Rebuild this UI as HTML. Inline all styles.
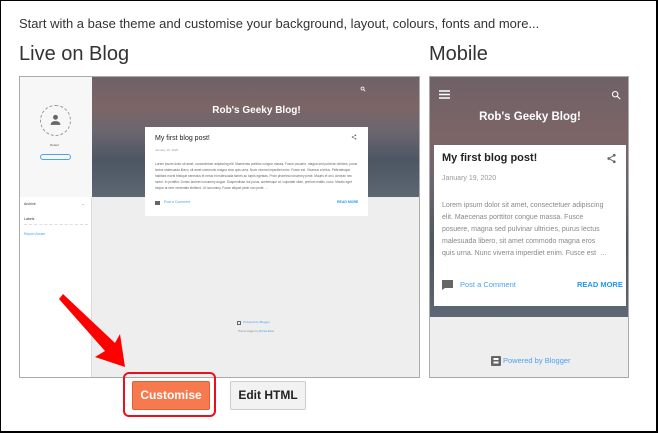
<!DOCTYPE html>
<html><head><meta charset="utf-8"><style>
*{box-sizing:border-box;margin:0;padding:0}
body{width:658px;height:433px;overflow:hidden;background:#fff;font-family:"Liberation Sans",Arial,sans-serif;position:relative}
.frame{position:absolute;left:0;top:0;width:658px;height:433px;border:1px solid #000;border-right:2px solid #000;border-bottom:2px solid #000;pointer-events:none;z-index:10}
.a{position:absolute}
.hdr{background:linear-gradient(180deg,#6f6169 0%,#7c6566 25%,#6b6670 45%,#4d5663 70%,#5d6874 100%)}
</style></head><body>
<div class="frame"></div>
<div class="a" style="left:19px;top:16px;font-size:13px;color:#333">Start with a base theme and customise your background, layout, colours, fonts and more...</div>
<div class="a" style="left:19px;top:43px;font-size:20px;color:#333">Live on Blog</div>
<div class="a" style="left:429px;top:43px;font-size:20px;color:#333">Mobile</div>

<div class="a" style="left:19px;top:76px;width:401px;height:302px;border:1px solid #aaa;background:#eee;overflow:hidden">
  <div class="a" style="left:0;top:0;width:72px;height:120px;background:#f7f7f7"></div>
  <div class="a" style="left:0;top:120px;width:72px;height:182px;background:#fff;border-right:1px solid #ddd"></div>
  <div class="a" style="left:20px;top:28px;width:31px;height:31px;border:1px dashed #999;border-radius:50%"></div>
  <svg class="a" style="left:29px;top:36px" width="13" height="13" viewBox="0 0 24 24"><circle cx="12" cy="8" r="4.5" fill="#666"/><path d="M3 22c0-5 4-7 9-7s9 2 9 7z" fill="#666"/></svg>
  <div class="a" style="left:30px;top:66px;font-size:3px;color:#555">Robert</div>
  <div class="a" style="left:20px;top:77px;width:31px;height:6px;border:1px solid #4aa3f2;border-radius:4px"></div>
  <div class="a" style="left:4px;top:125px;font-size:3.5px;color:#333">Archive</div>
  <div class="a" style="left:62px;top:124px;font-size:4px;color:#555">–</div>
  <div class="a" style="left:4px;top:140px;font-size:3.5px;color:#333">Labels</div>
  <div class="a" style="left:4px;top:147px;width:64px;border-top:1px dashed #ddd"></div>
  <div class="a" style="left:4px;top:155px;font-size:3.5px;color:#4aa3f2">Report Abuse</div>
  <div class="a hdr" style="left:72px;top:0;width:329px;height:120px"></div>
  <svg class="a" style="left:340px;top:9px" width="6" height="6" viewBox="0 0 24 24"><circle cx="10" cy="10" r="6" stroke="#fff" stroke-width="3" fill="none"/><path d="M14 14l7 7" stroke="#fff" stroke-width="3"/></svg>
  <div class="a" style="left:72px;top:28px;width:329px;text-align:center;color:#fff;font-weight:bold;font-size:10px">Rob's Geeky Blog!</div>
  <div class="a" style="left:125px;top:50px;width:223px;height:89px;background:#fff">
    <div class="a" style="left:10px;top:8px;font-size:7px;color:#222">My first blog post!</div>
    <svg class="a" style="left:206px;top:7px" width="6" height="6" viewBox="0 0 24 24"><circle cx="18" cy="5" r="3" fill="#666"/><circle cx="6" cy="12" r="3" fill="#666"/><circle cx="18" cy="19" r="3" fill="#666"/><path d="M18 5L6 12l12 7" stroke="#666" stroke-width="2" fill="none"/></svg>
    <div class="a" style="left:10px;top:21px;font-size:3px;color:#999">January 19, 2020</div>
    <div class="a" style="left:10px;top:34px;width:204px;font-size:3.2px;line-height:6px;color:#666;height:30px;overflow:hidden">Lorem ipsum dolor sit amet, consectetuer adipiscing elit. Maecenas porttitor congue massa. Fusce posuere, magna sed pulvinar ultricies, purus lectus malesuada libero, sit amet commodo magna eros quis urna. Nunc viverra imperdiet enim. Fusce est. Vivamus a tellus. Pellentesque habitant morbi tristique senectus et netus et malesuada fames ac turpis egestas. Proin pharetra nonummy pede. Mauris et orci. Aenean nec lorem. In porttitor. Donec laoreet nonummy augue. Suspendisse dui purus, scelerisque at, vulputate vitae, pretium mattis, nunc. Mauris eget neque at sem venenatis eleifend. Ut nonummy. Fusce aliquet pede non pede. …</div>
    <div class="a" style="left:10px;top:74px;width:5px;height:4px;background:#666"></div>
    <div class="a" style="left:19px;top:73px;font-size:3.5px;color:#4aa3f2">Post a Comment</div>
    <div class="a" style="left:192px;top:73px;font-size:3.5px;color:#2196f3;font-weight:bold">READ MORE</div>
  </div>
  <div class="a" style="left:217px;top:244px;width:4px;height:4px;border:1px solid #666"></div>
  <div class="a" style="left:223px;top:243px;font-size:3px;color:#4aa3f2">Powered by Blogger</div>
  <div class="a" style="left:218px;top:253px;font-size:2.5px;color:#888">Theme images by <span style="color:#4aa3f2">Michael Elkan</span></div>
</div>

<div class="a" style="left:429px;top:76px;width:200px;height:302px;border:1px solid #aaa;background:#eee;overflow:hidden">
  <div class="a hdr" style="left:0;top:0;width:200px;height:240px"></div>
  <svg class="a" style="left:9px;top:13px" width="11" height="9" viewBox="0 0 11 9"><path d="M0 1h11M0 4.5h11M0 8h11" stroke="#fff" stroke-width="1.4"/></svg>
  <svg class="a" style="left:181px;top:13px" width="10" height="10" viewBox="0 0 24 24"><circle cx="10" cy="10" r="6.5" stroke="#fff" stroke-width="2.5" fill="none"/><path d="M15 15l7 7" stroke="#fff" stroke-width="2.5"/></svg>
  <div class="a" style="left:0;top:34px;width:200px;text-align:center;color:#fff;font-weight:bold;font-size:11.5px">Rob's Geeky Blog!</div>
  <div class="a" style="left:4px;top:68px;width:192px;height:161px;background:#fff">
    <div class="a" style="left:8px;top:7px;font-size:11px;font-weight:bold;color:#222">My first blog post!</div>
    <svg class="a" style="left:172px;top:8px" width="11" height="11" viewBox="0 0 24 24"><circle cx="18" cy="5" r="3" fill="#666"/><circle cx="6" cy="12" r="3" fill="#666"/><circle cx="18" cy="19" r="3" fill="#666"/><path d="M18 5L6 12l12 7" stroke="#666" stroke-width="2" fill="none"/></svg>
    <div class="a" style="left:8px;top:30px;font-size:7px;color:#999">January 19, 2020</div>
    <div class="a" style="left:8px;top:55px;width:180px;font-size:7px;line-height:12px;color:#888;height:60px;overflow:hidden;white-space:nowrap">Lorem ipsum dolor sit amet, consectetuer adipiscing<br>elit. Maecenas porttitor congue massa. Fusce<br>posuere, magna sed pulvinar ultricies, purus lectus<br>malesuada libero, sit amet commodo magna eros<br>quis urna. Nunc viverra imperdiet enim. Fusce est &nbsp;…</div>
    <svg class="a" style="left:8px;top:135px" width="11" height="10" viewBox="0 0 11 10"><path d="M0 0h11v8H3L0 10z" fill="#666"/></svg>
    <div class="a" style="left:26px;top:135px;font-size:7.5px;color:#4aa3f2">Post a Comment</div>
    <div class="a" style="left:143px;top:135px;font-size:7.5px;color:#2196f3;font-weight:bold">READ MORE</div>
  </div>
  <svg class="a" style="left:61px;top:279px" width="10" height="10" viewBox="0 0 10 10"><rect width="10" height="10" rx="1" fill="#666"/><rect x="2.5" y="2" width="5" height="2" fill="#fff"/><rect x="2.5" y="5.5" width="5" height="2" fill="#fff"/></svg>
  <div class="a" style="left:73px;top:279px;font-size:7.5px;color:#4aa3f2">Powered by Blogger</div>
</div>

<div class="a" style="left:123px;top:372px;width:93px;height:45px;border:2px solid #e8101c;border-radius:6px"></div>
<div class="a" style="left:132px;top:381px;width:78px;height:29px;background:#f67a4e;border:1px solid #e0603a;border-radius:2px;color:#fff;font-weight:bold;font-size:12px;text-align:center;line-height:27px">Customise</div>
<div class="a" style="left:230px;top:381px;width:76px;height:29px;background:#f2f2f2;border:1px solid #ccc;border-radius:2px;color:#222;font-weight:bold;font-size:12px;text-align:center;line-height:27px">Edit HTML</div>

<svg class="a" style="left:55px;top:290px" width="80" height="82" viewBox="0 0 80 82"><path d="M4 9 L8 4 L60 53 L65 44 L70 77 L40 67 L50 61 Z" fill="#f00"/></svg>
</body></html>
